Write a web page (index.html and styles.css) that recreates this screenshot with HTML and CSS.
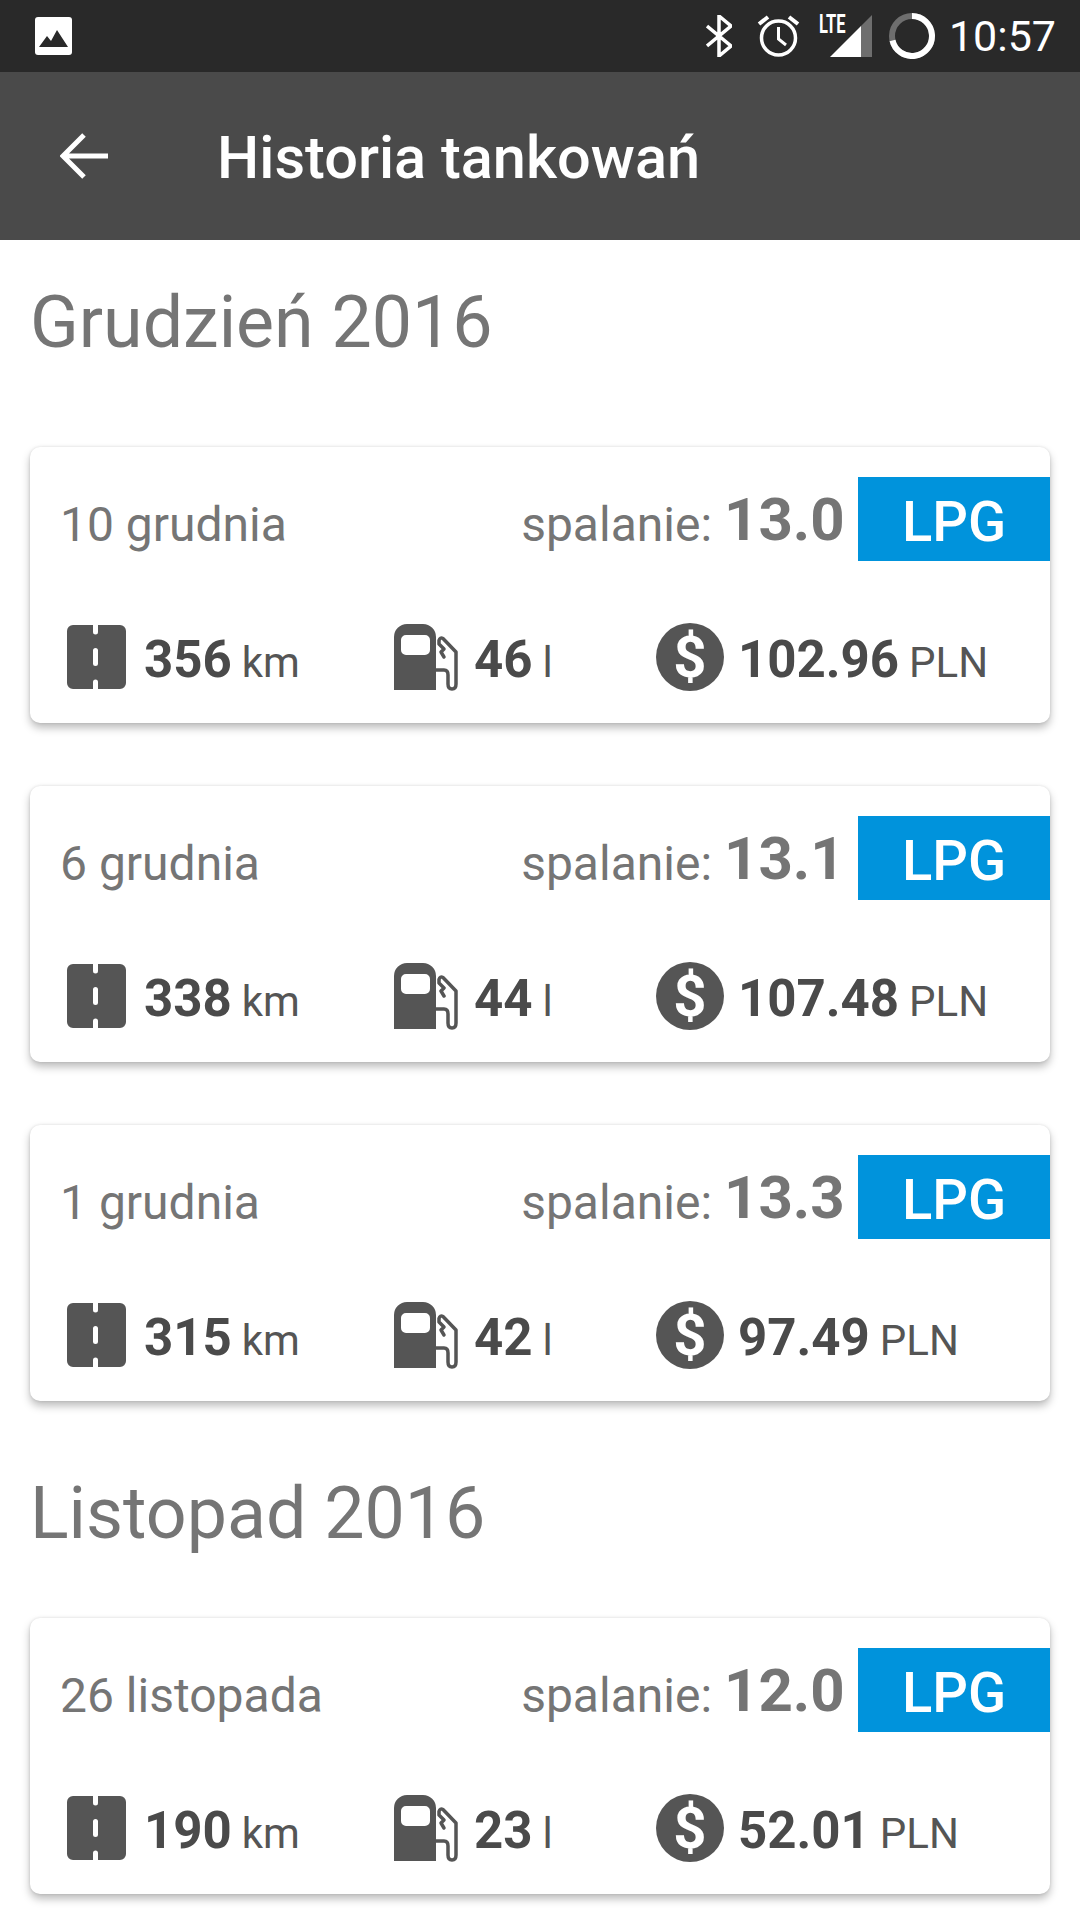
FILE: index.html
```html
<!DOCTYPE html>
<html lang="pl">
<head>
<meta charset="utf-8">
<title>Historia tankowań</title>
<link rel="stylesheet" href="styles.css">
</head>
<body>
<svg class="sprites" width="0" height="0" aria-hidden="true">
  <symbol id="road" viewBox="0 0 59 64">
    <path fill="#555" fill-rule="evenodd" d="M6 0H26V7a2.500 2.500 0 0 0 5 0V0H53a6 6 0 0 1 6 6V58a6 6 0 0 1-6 6H31V57a2.500 2.500 0 0 0-5 0V64H6a6 6 0 0 1-6-6V6a6 6 0 0 1 6-6ZM28.500 23a2.500 2.500 0 0 0-2.500 2.500V38.500a2.500 2.500 0 0 0 5 0V25.500A2.500 2.500 0 0 0 28.500 23Z"/>
  </symbol>
  <symbol id="fuel" viewBox="0 0 64 67">
    <path fill="#555" fill-rule="evenodd" d="M13 0H29A13 13 0 0 1 42 13V66H0V13A13 13 0 0 1 13 0ZM12 11a5 5 0 0 0-5 5V26a5 5 0 0 0 5 5H31a5 5 0 0 0 5-5V16a5 5 0 0 0-5-5Z"/>
    <path fill="none" stroke="#555" stroke-width="3.500" stroke-linejoin="round" stroke-linecap="round" d="M42 46H50Q54 46 54 51V60Q54 65 58 65T62 60V28L49 14.500Q46 13 45 16.500V20L50 25 47 28 50 33"/>
  </symbol>
</svg>

<header class="statusbar">
  <svg class="st-gallery" viewBox="0 0 37 38" width="37" height="38"><rect width="37" height="38" rx="3" fill="#fff"/><path d="M4 30 12 19l4 5 6-11 11 17Z" fill="#292929"/></svg>
  <div class="st-icons">
    <svg class="st-bt" viewBox="0 0 26 42" width="26" height="42"><path d="M1 11 25 31 13 41V1L25 11 1 31" fill="none" stroke="#fff" stroke-width="3.500"/></svg>
    <svg class="st-alarm" viewBox="0 0 43 42" width="43" height="42"><circle cx="21.500" cy="23" r="17" fill="none" stroke="#fff" stroke-width="3.500"/><path d="M21.500 12V24L29 30" fill="none" stroke="#fff" stroke-width="3"/><path d="M2 9 11 2M41 9 32 2" stroke="#fff" stroke-width="4"/></svg>
    <div class="st-signal">
      <span class="st-lte">LTE</span>
      <svg viewBox="0 0 42 42" width="42" height="42"><path d="M0 42 31 11V42Z" fill="#fff"/><path d="M31 11 42 0V42H31Z" fill="#6e6e6e"/></svg>
    </div>
    <svg class="st-ring" viewBox="0 0 46 46" width="46" height="46"><circle cx="23" cy="23" r="20" fill="none" stroke="#6e6e6e" stroke-width="6"/><path d="M23 3A20 20 0 1 1 3.500 27.500" fill="none" stroke="#fff" stroke-width="6"/></svg>
    <span class="st-time">10:57</span>
  </div>
</header>

<div class="appbar">
  <svg class="back" viewBox="0 0 48 46" width="48" height="46"><path d="M48 23H4M24 2 3 23 24 44" fill="none" stroke="#fff" stroke-width="5"/></svg>
  <h1 class="title">Historia tankowań</h1>
</div>

<main class="content">
  <section class="section">
    <h2 class="month">Grudzień 2016</h2>
    <div class="cards">
      <article class="card">
        <div class="row-top"><span class="date">10 grudnia</span><div class="usage"><span class="usage-label">spalanie:</span><b class="usage-val">13.0</b><span class="badge">LPG</span></div></div>
        <div class="row-stats">
          <div class="stat"><svg class="ic-road"><use href="#road"/></svg><b class="val">356</b><span class="unit">km</span></div>
          <div class="stat"><svg class="ic-fuel"><use href="#fuel"/></svg><b class="val">46</b><span class="unit">l</span></div>
          <div class="stat"><span class="ic-money">$</span><b class="val">102.96</b><span class="unit">PLN</span></div>
        </div>
      </article>
      <article class="card">
        <div class="row-top"><span class="date">6 grudnia</span><div class="usage"><span class="usage-label">spalanie:</span><b class="usage-val">13.1</b><span class="badge">LPG</span></div></div>
        <div class="row-stats">
          <div class="stat"><svg class="ic-road"><use href="#road"/></svg><b class="val">338</b><span class="unit">km</span></div>
          <div class="stat"><svg class="ic-fuel"><use href="#fuel"/></svg><b class="val">44</b><span class="unit">l</span></div>
          <div class="stat"><span class="ic-money">$</span><b class="val">107.48</b><span class="unit">PLN</span></div>
        </div>
      </article>
      <article class="card">
        <div class="row-top"><span class="date">1 grudnia</span><div class="usage"><span class="usage-label">spalanie:</span><b class="usage-val">13.3</b><span class="badge">LPG</span></div></div>
        <div class="row-stats">
          <div class="stat"><svg class="ic-road"><use href="#road"/></svg><b class="val">315</b><span class="unit">km</span></div>
          <div class="stat"><svg class="ic-fuel"><use href="#fuel"/></svg><b class="val">42</b><span class="unit">l</span></div>
          <div class="stat"><span class="ic-money">$</span><b class="val">97.49</b><span class="unit">PLN</span></div>
        </div>
      </article>
    </div>
  </section>
  <section class="section">
    <h2 class="month">Listopad 2016</h2>
    <div class="cards">
      <article class="card">
        <div class="row-top"><span class="date">26 listopada</span><div class="usage"><span class="usage-label">spalanie:</span><b class="usage-val">12.0</b><span class="badge">LPG</span></div></div>
        <div class="row-stats">
          <div class="stat"><svg class="ic-road"><use href="#road"/></svg><b class="val">190</b><span class="unit">km</span></div>
          <div class="stat"><svg class="ic-fuel"><use href="#fuel"/></svg><b class="val">23</b><span class="unit">l</span></div>
          <div class="stat"><span class="ic-money">$</span><b class="val">52.01</b><span class="unit">PLN</span></div>
        </div>
      </article>
    </div>
  </section>
</main>
</body>
</html>
```
FILE: styles.css
```css
* { box-sizing: border-box; }
html, body { margin: 0; padding: 0; }
body {
  width: 1080px;
  height: 1920px;
  overflow: hidden;
  background: #fff;
  font-family: Roboto, "Noto Sans", sans-serif;
}
.sprites { display: block; width: 0; height: 0; }

.statusbar {
  height: 72px;
  background: #292929;
  display: flex;
  align-items: center;
  justify-content: space-between;
  padding: 0 24px 0 35px;
}
.st-icons { display: flex; align-items: center; }
.st-bt { margin-right: 25px; }
.st-alarm { margin-right: 19px; }
.st-signal { position: relative; width: 53px; height: 42px; display: flex; justify-content: flex-end; margin-right: 17px; }
.st-lte { position: absolute; left: 0; top: -3px; font-size: 25px; font-weight: 700; line-height: 26px; color: #fff; transform: scaleX(.66); transform-origin: left center; }
.st-ring { margin-right: 14px; }
.st-time { font-size: 43px; line-height: 48px; color: #fff; }

.appbar {
  height: 168px;
  background: #4a4a4a;
  display: flex;
  align-items: center;
  padding-left: 60px;
}
.back { margin-right: 109px; }
.title { margin: 0; padding-top: 4px; font-size: 59.5px; font-weight: 500; color: #fff; line-height: 68px; }

.content { padding: 0 30px; }
.month {
  margin: 0;
  height: 207px;
  padding-top: 41px;
  font-size: 71.7px;
  line-height: 84px;
  font-weight: 400;
  color: #757575;
}
.section + .section { margin-top: 10px; }
.section + .section .month { padding-top: 61px; }
.cards { display: flex; flex-direction: column; gap: 63px; }
.card {
  height: 276px;
  background: #fff;
  border-radius: 10px;
  box-shadow: 0 5px 8px rgba(0,0,0,.26), 0 0 3px rgba(0,0,0,.12);
  padding-top: 30px;
}
.row-top { display: flex; justify-content: space-between; align-items: flex-start; padding-left: 30px; }
.date { font-size: 48px; line-height: 54px; color: #757575; margin-top: 21px; }
.usage { display: flex; align-items: flex-start; }
.usage-label { font-size: 48px; line-height: 54px; color: #757575; margin-top: 21px; }
.usage-val { font-size: 60px; line-height: 68px; font-weight: 700; color: #757575; margin: 9px 18px 0 12px; width: 116px; white-space: nowrap; }
.badge {
  width: 192px;
  height: 84px;
  background: #0093dc;
  color: #fff;
  font-size: 56px;
  font-weight: 500;
  line-height: 90px;
  text-align: center;
}
.row-stats {
  display: grid;
  grid-template-columns: 327px 262px 1fr;
  padding-left: 37px;
  margin-top: 63px;
  align-items: center;
}
.stat { display: flex; align-items: center; height: 68px; }
.val { font-size: 51px; line-height: 58px; font-weight: 700; color: #4a4a4a; margin-top: 4px; }
.unit { font-size: 42px; line-height: 48px; color: #555; margin-left: 10px; margin-top: 9px; }
.ic-road { width: 59px; height: 64px; margin: 0 18px 2px 0; flex: none; }
.ic-fuel { width: 64px; height: 67px; margin: 0 16px 2px 0; flex: none; }
.ic-money {
  width: 68px;
  height: 68px;
  border-radius: 50%;
  background: #555;
  color: #fff;
  font-size: 58px;
  font-weight: 700;
  line-height: 68px;
  text-align: center;
  margin: 0 14px 3px 0;
  flex: none;
}
```
